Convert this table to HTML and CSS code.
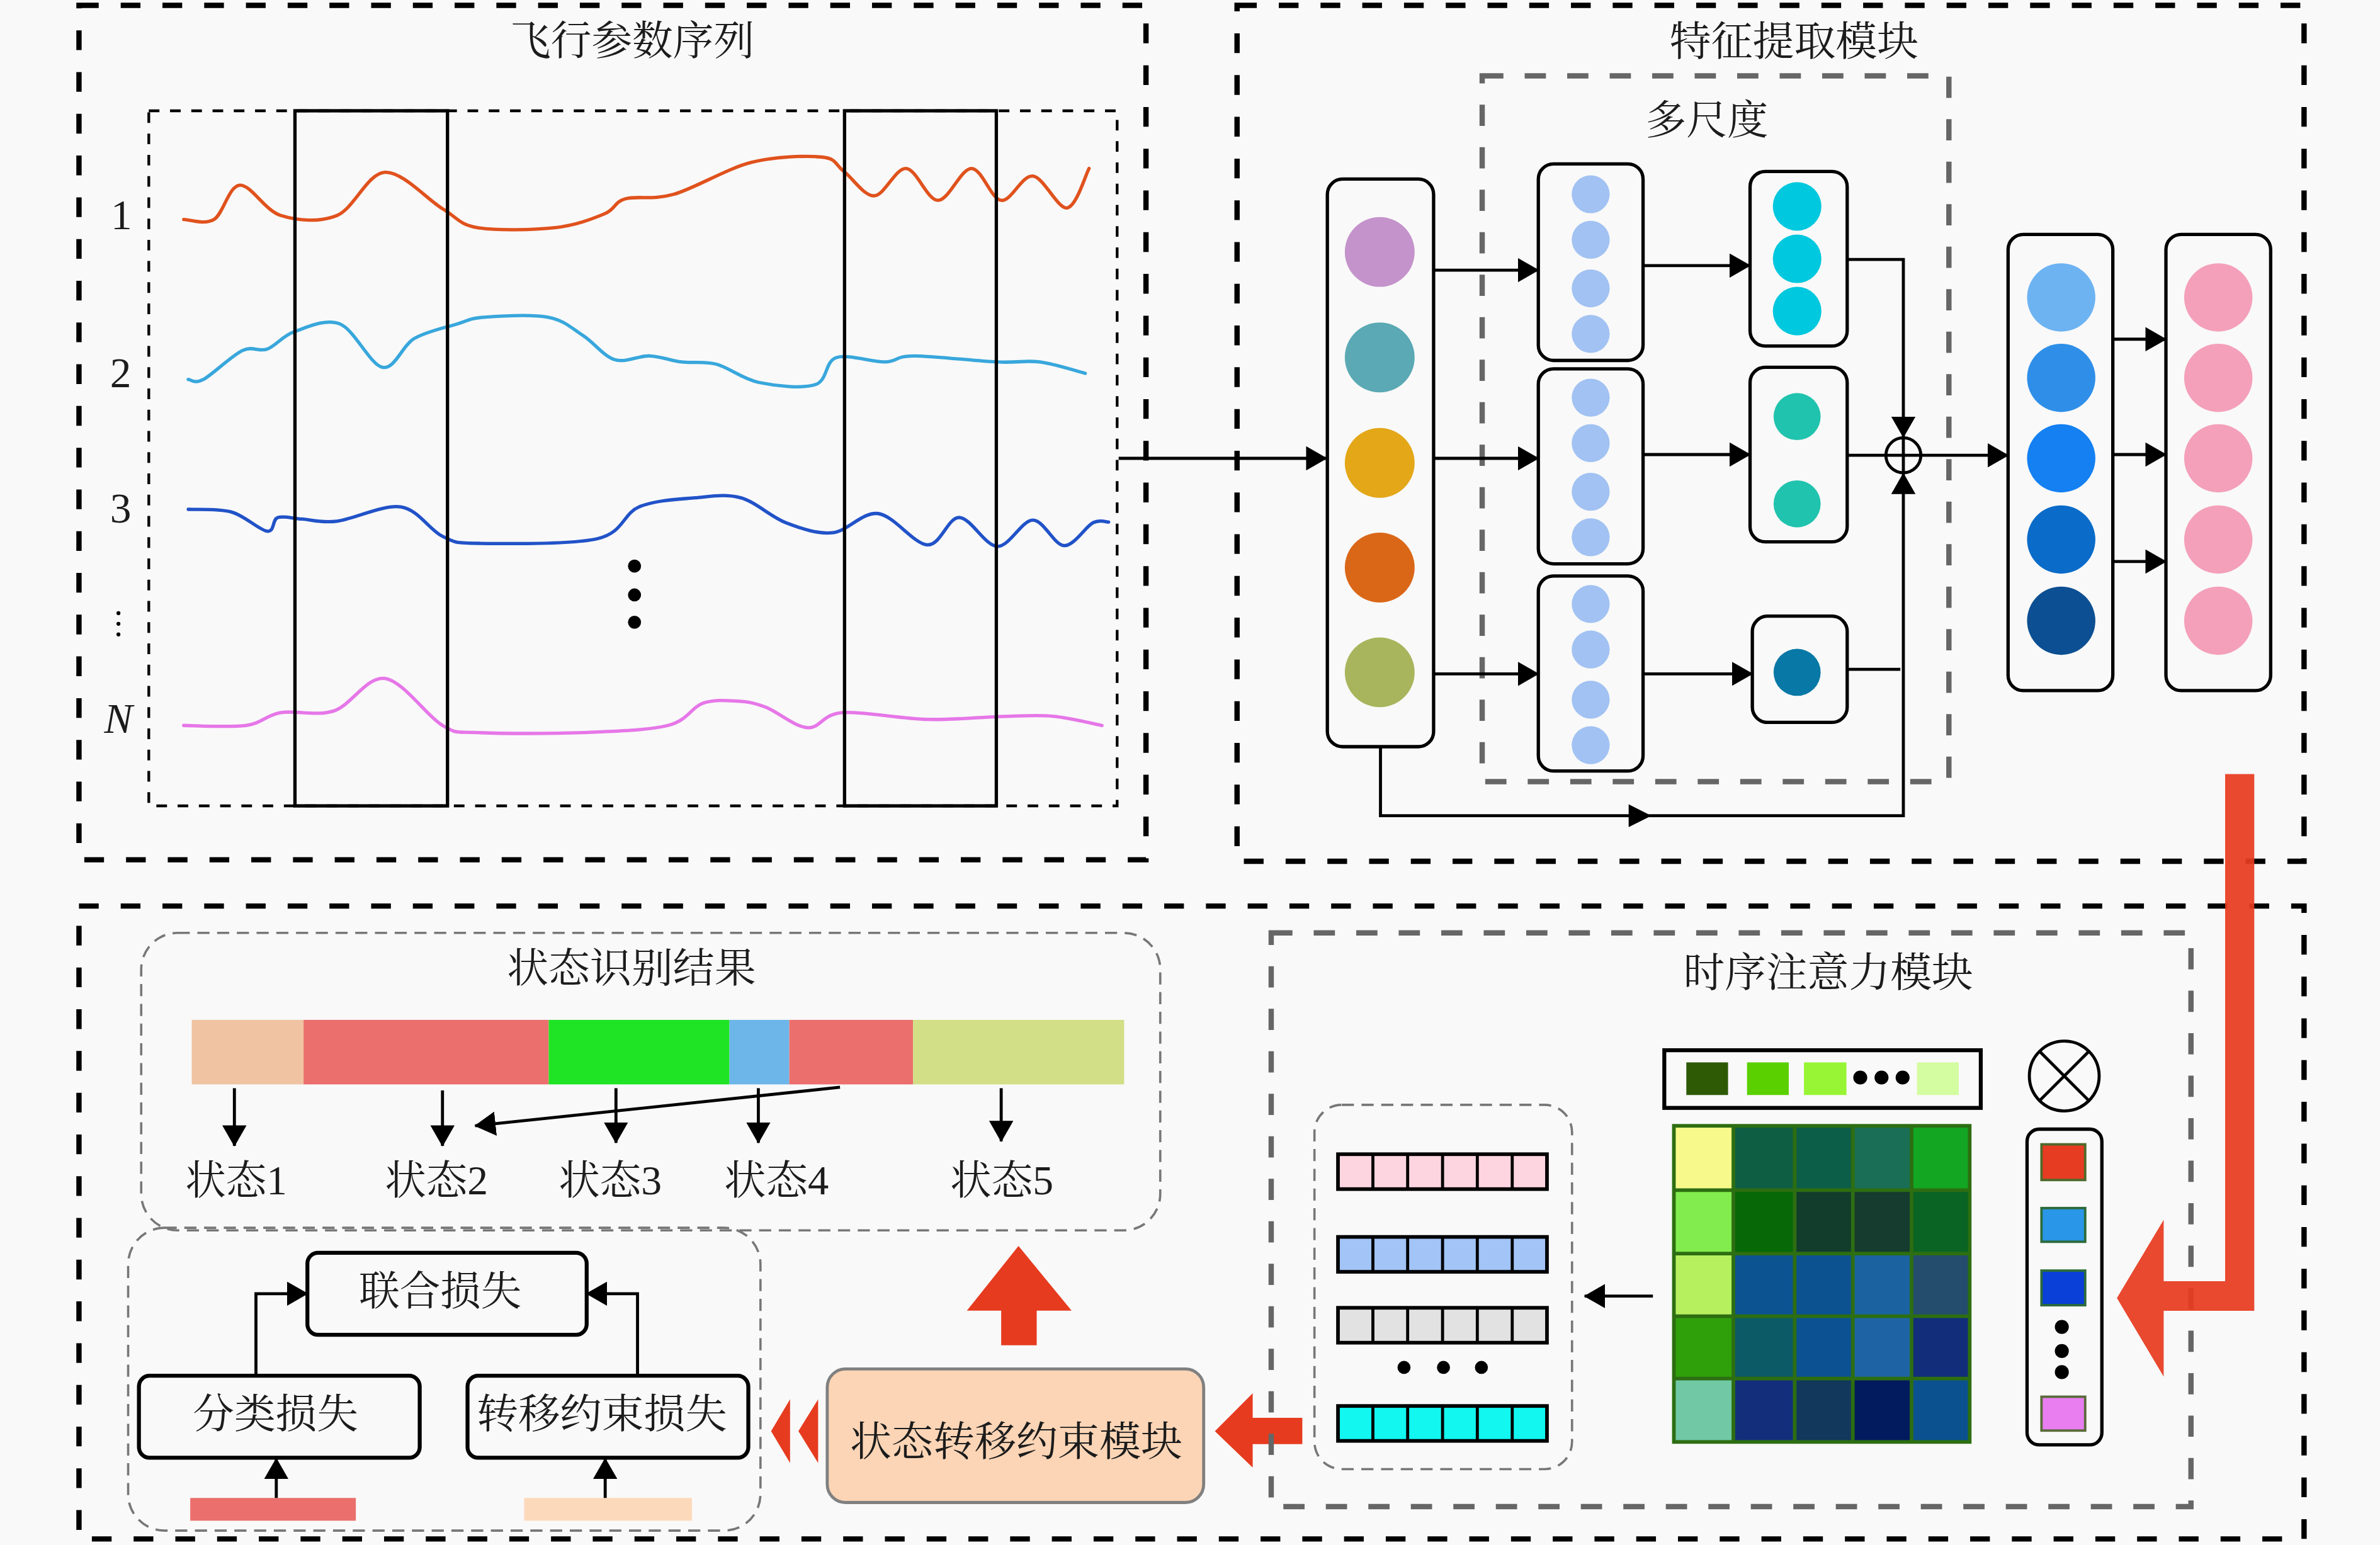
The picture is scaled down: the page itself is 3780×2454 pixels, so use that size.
FILE: index.html
```html
<!DOCTYPE html>
<html lang="zh">
<head>
<meta charset="utf-8">
<title>飞行状态识别框架</title>
<link rel="stylesheet" href="styles.css">
</head>
<body>
<svg class="canvas" viewBox="0 0 1568 1018" xmlns="http://www.w3.org/2000/svg">
  <defs>
    <marker id="arr" viewBox="0 0 14 16" refX="13.5" refY="8" markerWidth="14" markerHeight="16" markerUnits="userSpaceOnUse" orient="auto">
      <path d="M0,0 L14,8 L0,16 z" class="ink"/>
    </marker>
  </defs>

  <!-- ============ Panel 1: flight parameter sequence ============ -->
  <g class="panel-seq">
    <rect class="frame" x="52" y="3.5" width="703" height="563"/>
    <text class="txt" x="336" y="36" textLength="161" lengthAdjust="spacingAndGlyphs">飞行参数序列</text>
    <rect class="dotted" x="98" y="73" width="638" height="458"/>

    <path class="curve c-orange" data-pts="121,144.6 141,144.6 158,122 185,142 222,142 253.5,113.5 291.5,137.5 314.6,150 365.6,150 398,141 412,131 444,128 495,107 541.5,103.5 556,113 576,129 597,111 618,132 640,111 659.6,132 680.5,116 703,137 717.5,111"/>
    <path class="curve c-sky" data-pts="124,250 134,250 159.6,231 176,230 194,218.5 224,213.5 252,242 273,223 301,213.5 319,209 361,209 384,221 405,237 428,234.5 449,238.5 472,240 500,252 537,253.5 551,235.6 583,238.5 602,234.5 657,238.5 685,238.5 715,246"/>
    <path class="curve c-blue" data-pts="124,335.6 152.6,337.4 176,350 183,341 199,342 222,343.4 264,334 291.5,353.4 315,358 393.4,355 421,334 458,328 488,328 518,344.5 548.5,351 578.6,338.4 611,359 632,341 657,360 680.4,342.7 701,359.5 720,344.5 730.4,344"/>
    <path class="curve c-pink" data-pts="121,478 162,478 185,469.5 220,468.4 253.6,447 291.5,478 315,482.7 384,482.7 440,478 463,463.4 486,462 504.5,466 532,479.5 555,469.5 611,474 662,472 694.5,472 726,478"/>

    <rect class="window" x="194.3" y="73" width="100.5" height="458"/>
    <rect class="window" x="556.4" y="73" width="100" height="458"/>

    <text class="txt num" x="80" y="151">1</text>
    <text class="txt num" x="79.5" y="255">2</text>
    <text class="txt num" x="79.5" y="344.5">3</text>
    <circle class="ink" cx="78" cy="404" r="1.3"/>
    <circle class="ink" cx="78" cy="411" r="1.3"/>
    <circle class="ink" cx="78" cy="418" r="1.3"/>
    <text class="txt num ital" x="78" y="483">N</text>

    <circle class="ink" cx="418" cy="373" r="4.3"/>
    <circle class="ink" cx="418" cy="392" r="4.3"/>
    <circle class="ink" cx="418" cy="410" r="4.3"/>
  </g>

  <!-- input arrow into feature extraction -->
  <line class="wire arrow" x1="737" y1="302" x2="874" y2="302"/>

  <!-- ============ Panel 2: feature extraction ============ -->
  <g class="panel-feat">
    <rect class="frame" x="815" y="3.5" width="703" height="564"/>
    <text class="txt" x="1100" y="36.5" textLength="164" lengthAdjust="spacingAndGlyphs">特征提取模块</text>
    <rect class="frame-gray" x="976.5" y="50" width="307.5" height="465"/>
    <text class="txt" x="1084" y="88.5" textLength="81" lengthAdjust="spacingAndGlyphs">多尺度</text>

    <!-- column 1 -->
    <rect class="box" x="874.5" y="118" width="70" height="374" rx="10"/>
    <circle class="f-lilac" cx="909" cy="166" r="23"/>
    <circle class="f-teal" cx="909" cy="235.5" r="23"/>
    <circle class="f-amber" cx="909" cy="305" r="23"/>
    <circle class="f-rust" cx="909" cy="374" r="23"/>
    <circle class="f-olive" cx="909" cy="443" r="23"/>

    <!-- column 2 -->
    <rect class="box" x="1013.5" y="108" width="69" height="129.5" rx="10"/>
    <rect class="box" x="1013.5" y="243" width="69" height="128.5" rx="10"/>
    <rect class="box" x="1013.5" y="379.5" width="69" height="128.5" rx="10"/>
    <g class="f-pale">
      <circle cx="1048" cy="128" r="12.5"/><circle cx="1048" cy="158" r="12.5"/>
      <circle cx="1048" cy="190" r="12.5"/><circle cx="1048" cy="220" r="12.5"/>
      <circle cx="1048" cy="262" r="12.5"/><circle cx="1048" cy="292" r="12.5"/>
      <circle cx="1048" cy="324" r="12.5"/><circle cx="1048" cy="354" r="12.5"/>
      <circle cx="1048" cy="398" r="12.5"/><circle cx="1048" cy="428" r="12.5"/>
      <circle cx="1048" cy="461" r="12.5"/><circle cx="1048" cy="491" r="12.5"/>
    </g>

    <!-- column 3 -->
    <rect class="box" x="1153" y="113" width="64" height="115" rx="10"/>
    <rect class="box" x="1153" y="242" width="64" height="115" rx="10"/>
    <rect class="box" x="1154.5" y="406" width="62.5" height="70" rx="10"/>
    <circle class="f-cyan" cx="1184" cy="136" r="16"/>
    <circle class="f-cyan" cx="1184" cy="170.5" r="16"/>
    <circle class="f-cyan" cx="1184" cy="205" r="16"/>
    <circle class="f-jade" cx="1184" cy="274.5" r="15.5"/>
    <circle class="f-jade" cx="1184" cy="332" r="15.5"/>
    <circle class="f-ocean" cx="1184" cy="443" r="15.5"/>

    <!-- arrows col1 -> col2 -> col3 -->
    <line class="wire arrow" x1="944.5" y1="178" x2="1013.5" y2="178"/>
    <line class="wire arrow" x1="944.5" y1="302" x2="1013.5" y2="302"/>
    <line class="wire arrow" x1="944.5" y1="444" x2="1013.5" y2="444"/>
    <line class="wire arrow" x1="1082.5" y1="175" x2="1153" y2="175"/>
    <line class="wire arrow" x1="1082.5" y1="299.5" x2="1153" y2="299.5"/>
    <line class="wire arrow" x1="1082.5" y1="444" x2="1154.5" y2="444"/>

    <!-- fusion -->
    <path class="wire arrow" d="M1217,171 H1254 V288"/>
    <line class="wire" x1="1217" y1="441" x2="1252" y2="441"/>
    <path class="wire arrow" d="M909.5,492 V537.5 H1254 V312"/>
    <polygon class="ink" points="1073,530 1088,537.5 1073,545"/>
    <line class="wire arrow" x1="1217" y1="300" x2="1323" y2="300"/>
    <line class="wire" x1="1254" y1="288" x2="1254" y2="312"/>
    <circle class="ring" cx="1254" cy="300" r="11.5"/>

    <!-- column 4 & 5 -->
    <rect class="box" x="1323" y="154.5" width="69" height="300.5" rx="10"/>
    <circle class="f-b1" cx="1358" cy="196" r="22.5"/>
    <circle class="f-b2" cx="1358" cy="249" r="22.5"/>
    <circle class="f-b3" cx="1358" cy="302" r="22.5"/>
    <circle class="f-b4" cx="1358" cy="355.5" r="22.5"/>
    <circle class="f-b5" cx="1358" cy="409" r="22.5"/>
    <rect class="box" x="1427" y="154.5" width="69" height="300.5" rx="10"/>
    <g class="f-rose">
      <circle cx="1461.5" cy="196" r="22.5"/><circle cx="1461.5" cy="249" r="22.5"/>
      <circle cx="1461.5" cy="302" r="22.5"/><circle cx="1461.5" cy="355.5" r="22.5"/>
      <circle cx="1461.5" cy="409" r="22.5"/>
    </g>
    <line class="wire arrow" x1="1392" y1="223.5" x2="1427" y2="223.5"/>
    <line class="wire arrow" x1="1392" y1="299.5" x2="1427" y2="299.5"/>
    <line class="wire arrow" x1="1392" y1="370" x2="1427" y2="370"/>
  </g>

  <!-- ============ Bottom panel ============ -->
  <rect class="frame" x="52" y="597" width="1466" height="417"/>

  <!-- state recognition result -->
  <g class="panel-result">
    <rect class="frame-thin" x="93" y="614.7" width="671.4" height="196" rx="24"/>
    <text class="txt" x="334" y="647" textLength="164" lengthAdjust="spacingAndGlyphs">状态识别结果</text>
    <rect class="s-peach" x="126.3" y="672" width="74" height="42.5"/>
    <rect class="s-salmon" x="200" y="672" width="161.5" height="42.5"/>
    <rect class="s-green" x="361.5" y="672" width="119.1" height="42.5"/>
    <rect class="s-sky" x="480.6" y="672" width="39.4" height="42.5"/>
    <rect class="s-salmon" x="520" y="672" width="81.5" height="42.5"/>
    <rect class="s-lime" x="601.5" y="672" width="139.1" height="42.5"/>

    <line class="wire arrow" x1="154.4" y1="717" x2="154.4" y2="755"/>
    <line class="wire arrow" x1="291.5" y1="718.5" x2="291.5" y2="755"/>
    <line class="wire arrow" x1="405.8" y1="717" x2="405.8" y2="753"/>
    <line class="wire arrow" x1="499.6" y1="717" x2="499.6" y2="753"/>
    <line class="wire arrow" x1="659.6" y1="717" x2="659.6" y2="752"/>
    <line class="wire arrow" x1="553.4" y1="716.4" x2="313" y2="741.8"/>

    <text class="txt" x="122" y="787" textLength="67" lengthAdjust="spacingAndGlyphs">状态1</text>
    <text class="txt" x="253.5" y="787" textLength="68" lengthAdjust="spacingAndGlyphs">状态2</text>
    <text class="txt" x="368" y="787" textLength="68" lengthAdjust="spacingAndGlyphs">状态3</text>
    <text class="txt" x="477" y="787" textLength="69" lengthAdjust="spacingAndGlyphs">状态4</text>
    <text class="txt" x="626" y="787" textLength="68" lengthAdjust="spacingAndGlyphs">状态5</text>
  </g>

  <!-- losses -->
  <g class="panel-loss">
    <rect class="frame-thin" x="84.4" y="809" width="416.6" height="199.5" rx="24"/>
    <rect class="lbox" x="202.5" y="825.5" width="184" height="54" rx="7"/>
    <text class="txt" x="236.5" y="860" textLength="107" lengthAdjust="spacingAndGlyphs">联合损失</text>
    <rect class="lbox" x="91.5" y="906.5" width="185" height="54" rx="7"/>
    <text class="txt" x="127" y="941" textLength="109" lengthAdjust="spacingAndGlyphs">分类损失</text>
    <rect class="lbox" x="308" y="906.5" width="185" height="54" rx="7"/>
    <text class="txt" x="314" y="941" textLength="165" lengthAdjust="spacingAndGlyphs">转移约束损失</text>
    <path class="wire arrow" d="M168.6,906.5 V852.4 H202.5"/>
    <path class="wire arrow" d="M420,906.5 V852.4 H386.5"/>
    <rect class="s-salmon" x="125.3" y="987" width="109.1" height="15"/>
    <rect class="s-cream" x="345.3" y="987" width="110.5" height="15"/>
    <line class="wire arrow" x1="182" y1="987" x2="182" y2="961"/>
    <line class="wire arrow" x1="398.7" y1="987" x2="398.7" y2="961"/>
  </g>

  <!-- state transition constraint module -->
  <rect class="module" x="545" y="902" width="248" height="88" rx="12"/>
  <text class="txt" x="560" y="959" textLength="219" lengthAdjust="spacingAndGlyphs">状态转移约束模块</text>
  <polygon class="red" points="671,821 706,863.6 683,863.6 683,886.4 659.6,886.4 659.6,863.6 637,863.6"/>
  <polygon class="red" points="508,943 520.5,922 520.5,964"/>
  <polygon class="red" points="526,943 539,922 539,964"/>
  <polygon class="red" points="800.4,943 825.3,918 825.3,934.2 858,934.2 858,951.5 825.3,951.5 825.3,967"/>

  <!-- temporal attention module -->
  <g class="panel-attn">
    <rect class="frame-gray" x="837.5" y="614.7" width="606" height="378"/>
    <text class="txt" x="1109" y="650" textLength="191" lengthAdjust="spacingAndGlyphs">时序注意力模块</text>

    <rect class="frame-thin" x="866" y="728" width="169.7" height="240" rx="18"/>
    <g class="cells">
      <rect class="c-pinkcell" x="881.5" y="760.5" width="137.7" height="23"/>
      <rect class="c-bluecell" x="881.5" y="815" width="137.7" height="23"/>
      <rect class="c-graycell" x="881.5" y="861.7" width="137.7" height="23"/>
      <rect class="c-cyancell" x="881.5" y="926.4" width="137.7" height="23"/>
      <path class="div" d="M904.5,760.5 v23 M927.4,760.5 v23 M950.4,760.5 v23 M973.3,760.5 v23 M996.3,760.5 v23
                           M904.5,815 v23 M927.4,815 v23 M950.4,815 v23 M973.3,815 v23 M996.3,815 v23
                           M904.5,861.7 v23 M927.4,861.7 v23 M950.4,861.7 v23 M973.3,861.7 v23 M996.3,861.7 v23
                           M904.5,926.4 v23 M927.4,926.4 v23 M950.4,926.4 v23 M973.3,926.4 v23 M996.3,926.4 v23"/>
    </g>
    <circle class="ink" cx="925" cy="901" r="4.3"/>
    <circle class="ink" cx="951" cy="901" r="4.3"/>
    <circle class="ink" cx="976" cy="901" r="4.3"/>
    <line class="wire arrow" x1="1089" y1="854" x2="1044" y2="854"/>

    <!-- legend -->
    <rect class="lbox" x="1096.5" y="692" width="208.5" height="38"/>
    <rect class="g1" x="1111" y="700" width="27.5" height="21.5"/>
    <rect class="g2" x="1151" y="700" width="27.5" height="21.5"/>
    <rect class="g3" x="1188.5" y="700" width="28" height="21.5"/>
    <circle class="ink" cx="1225.6" cy="710" r="4.6"/>
    <circle class="ink" cx="1239.6" cy="710" r="4.6"/>
    <circle class="ink" cx="1253.5" cy="710" r="4.6"/>
    <rect class="g4" x="1263" y="700" width="27.5" height="21.5"/>

    <!-- attention matrix -->
    <g class="matrix">
      <rect class="m11" x="1102.8" y="741.8" width="39.2" height="42.4"/>
      <rect class="m12" x="1142" y="741.8" width="40.4" height="42.4"/>
      <rect class="m13" x="1182.4" y="741.8" width="38.3" height="42.4"/>
      <rect class="m14" x="1220.7" y="741.8" width="38.7" height="42.4"/>
      <rect class="m15" x="1259.4" y="741.8" width="38.3" height="42.4"/>
      <rect class="m21" x="1102.8" y="784.2" width="39.2" height="41.8"/>
      <rect class="m22" x="1142" y="784.2" width="40.4" height="41.8"/>
      <rect class="m23" x="1182.4" y="784.2" width="38.3" height="41.8"/>
      <rect class="m24" x="1220.7" y="784.2" width="38.7" height="41.8"/>
      <rect class="m25" x="1259.4" y="784.2" width="38.3" height="41.8"/>
      <rect class="m31" x="1102.8" y="826" width="39.2" height="41.3"/>
      <rect class="m32" x="1142" y="826" width="40.4" height="41.3"/>
      <rect class="m33" x="1182.4" y="826" width="38.3" height="41.3"/>
      <rect class="m34" x="1220.7" y="826" width="38.7" height="41.3"/>
      <rect class="m35" x="1259.4" y="826" width="38.3" height="41.3"/>
      <rect class="m41" x="1102.8" y="867.3" width="39.2" height="41"/>
      <rect class="m42" x="1142" y="867.3" width="40.4" height="41"/>
      <rect class="m43" x="1182.4" y="867.3" width="38.3" height="41"/>
      <rect class="m44" x="1220.7" y="867.3" width="38.7" height="41"/>
      <rect class="m45" x="1259.4" y="867.3" width="38.3" height="41"/>
      <rect class="m51" x="1102.8" y="908.3" width="39.2" height="41.8"/>
      <rect class="m52" x="1142" y="908.3" width="40.4" height="41.8"/>
      <rect class="m53" x="1182.4" y="908.3" width="38.3" height="41.8"/>
      <rect class="m54" x="1220.7" y="908.3" width="38.7" height="41.8"/>
      <rect class="m55" x="1259.4" y="908.3" width="38.3" height="41.8"/>
      <path class="grid" d="M1142,741.8 V950.1 M1182.4,741.8 V950.1 M1220.7,741.8 V950.1 M1259.4,741.8 V950.1
                            M1102.8,784.2 H1297.7 M1102.8,826 H1297.7 M1102.8,867.3 H1297.7 M1102.8,908.3 H1297.7"/>
      <rect class="grid" x="1102.8" y="741.8" width="194.9" height="208.3"/>
    </g>

    <!-- otimes and weight column -->
    <circle class="ring" cx="1360" cy="709" r="23"/>
    <path class="wire" d="M1343.7,692.7 L1376.3,725.3 M1376.3,692.7 L1343.7,725.3"/>
    <rect class="box" x="1335.5" y="744" width="49.3" height="208" rx="8"/>
    <rect class="w-red" x="1345" y="754" width="28.8" height="23.5"/>
    <rect class="w-blue" x="1345" y="796" width="28.8" height="22.2"/>
    <rect class="w-navy" x="1345" y="837.2" width="28.8" height="22.8"/>
    <circle class="ink" cx="1358.4" cy="874.3" r="4.6"/>
    <circle class="ink" cx="1358.4" cy="890.2" r="4.6"/>
    <circle class="ink" cx="1358.4" cy="904.1" r="4.6"/>
    <rect class="w-pink" x="1345" y="920.3" width="28.8" height="22.3"/>
  </g>

  <!-- big red arrow from feature extraction to attention -->
  <polygon class="red big" points="1466,510 1485.2,510 1485.2,863.7 1425.5,863.7 1425.5,907 1394.7,855.3 1425.5,803.7 1425.5,844.2 1466,844.2"/>
</svg>
<script src="script.js"></script>
</body>
</html>
```

FILE: styles.css
```css
html, body {
  margin: 0;
  padding: 0;
  background: #f9f9f9;
}

.canvas {
  display: block;
  width: 3780px;
  height: 2454px;
}

.txt {
  font-family: "Liberation Serif", "Noto Serif CJK SC", "Noto Sans CJK SC", serif;
  font-size: 27px;
  fill: #1c1c1c;
}
.num {
  font-size: 28px;
  text-anchor: middle;
}
.ital {
  font-style: italic;
}

.ink { fill: #000; }

.frame {
  fill: none;
  stroke: #000;
  stroke-width: 3.5;
  stroke-dasharray: 13 14.5;
}
.frame-gray {
  fill: none;
  stroke: #666;
  stroke-width: 3.5;
  stroke-dasharray: 14 14;
}
.frame-thin {
  fill: none;
  stroke: #777;
  stroke-width: 1.5;
  stroke-dasharray: 8 5;
}
.dotted {
  fill: none;
  stroke: #000;
  stroke-width: 1.8;
  stroke-dasharray: 7 7;
}
.window {
  fill: none;
  stroke: #000;
  stroke-width: 2.2;
}
.box {
  fill: none;
  stroke: #000;
  stroke-width: 2.2;
}
.lbox {
  fill: none;
  stroke: #000;
  stroke-width: 2.6;
}
.ring {
  fill: none;
  stroke: #000;
  stroke-width: 2;
}
.wire {
  fill: none;
  stroke: #000;
  stroke-width: 2;
}
.arrow {
  marker-end: url(#arr);
}

.curve {
  fill: none;
  stroke-width: 2.2;
  stroke-linejoin: round;
  stroke-linecap: round;
}
.c-orange { stroke: #e0521d; }
.c-sky { stroke: #38a7dc; }
.c-blue { stroke: #2152c8; }
.c-pink { stroke: #e677e8; }

/* feature circles */
.f-lilac { fill: #c493cb; }
.f-teal { fill: #5aa9b4; }
.f-amber { fill: #e3a718; }
.f-rust { fill: #da6718; }
.f-olive { fill: #a8b55c; }
.f-pale { fill: #a1c2f2; }
.f-cyan { fill: #00c8de; }
.f-jade { fill: #20c3ad; }
.f-ocean { fill: #0878a6; }
.f-b1 { fill: #6db3f2; }
.f-b2 { fill: #2f8fe8; }
.f-b3 { fill: #1480f2; }
.f-b4 { fill: #0a6bc9; }
.f-b5 { fill: #0c4f92; }
.f-rose { fill: #f4a0bb; }

/* state bar */
.s-peach { fill: #f0c4a2; }
.s-salmon { fill: #eb6f6c; }
.s-green { fill: #1fe426; }
.s-sky { fill: #6cb6ea; }
.s-lime { fill: #d3df87; }
.s-cream { fill: #fdd9bb; }

.module {
  fill: #fcd5b6;
  stroke: #808080;
  stroke-width: 2;
}
.red { fill: #e63b1f; }
.big { opacity: 0.93; }

/* sequence cells */
.c-pinkcell { fill: #fdd5e0; stroke: #000; stroke-width: 2.4; }
.c-bluecell { fill: #a2c4f6; stroke: #000; stroke-width: 2.4; }
.c-graycell { fill: #e2e2e2; stroke: #000; stroke-width: 2.4; }
.c-cyancell { fill: #12f7f0; stroke: #000; stroke-width: 2.4; }
.div { fill: none; stroke: #000; stroke-width: 2; }

/* legend */
.g1 { fill: #2e5a06; }
.g2 { fill: #5bd000; }
.g3 { fill: #98f535; }
.g4 { fill: #d4fca0; }

/* matrix */
.m11 { fill: #f7f98a; } .m12 { fill: #0e5e44; } .m13 { fill: #0d5e48; } .m14 { fill: #1a6e55; } .m15 { fill: #12a623; }
.m21 { fill: #82eb4e; } .m22 { fill: #066806; } .m23 { fill: #123d2c; } .m24 { fill: #153c2e; } .m25 { fill: #0a6423; }
.m31 { fill: #b6f05e; } .m32 { fill: #0c5392; } .m33 { fill: #0c5190; } .m34 { fill: #1a63a0; } .m35 { fill: #244c6c; }
.m41 { fill: #30a00a; } .m42 { fill: #0c5a65; } .m43 { fill: #0c5292; } .m44 { fill: #1e64a4; } .m45 { fill: #122d7a; }
.m51 { fill: #70c8a4; } .m52 { fill: #132f7c; } .m53 { fill: #12385c; } .m54 { fill: #021a5e; } .m55 { fill: #0b5190; }
.grid { fill: none; stroke: #2d6e12; stroke-width: 2.4; }

/* weights */
.w-red { fill: #e63c22; stroke: #4f6a2a; stroke-width: 1.6; }
.w-blue { fill: #2a96e8; stroke: #2c6b3a; stroke-width: 1.6; }
.w-navy { fill: #0a3fd8; stroke: #2c6b3a; stroke-width: 1.6; }
.w-pink { fill: #e87ef0; stroke: #5a6a3a; stroke-width: 1.6; }
```

FILE: script.js
```js
// Build smooth (Catmull-Rom) curves from the sampled points of each signal.
document.querySelectorAll('path[data-pts]').forEach(function (p) {
  var pts = p.getAttribute('data-pts').trim().split(/\s+/).map(function (s) {
    return s.split(',').map(Number);
  });
  var d = 'M' + pts[0][0] + ',' + pts[0][1];
  for (var i = 0; i < pts.length - 1; i++) {
    var p0 = pts[i - 1] || pts[i];
    var p1 = pts[i];
    var p2 = pts[i + 1];
    var p3 = pts[i + 2] || p2;
    var c1x = p1[0] + (p2[0] - p0[0]) / 6;
    var c1y = p1[1] + (p2[1] - p0[1]) / 6;
    var c2x = p2[0] - (p3[0] - p1[0]) / 6;
    var c2y = p2[1] - (p3[1] - p1[1]) / 6;
    d += ' C' + c1x.toFixed(2) + ',' + c1y.toFixed(2) + ' ' +
         c2x.toFixed(2) + ',' + c2y.toFixed(2) + ' ' + p2[0] + ',' + p2[1];
  }
  p.setAttribute('d', d);
});
```
